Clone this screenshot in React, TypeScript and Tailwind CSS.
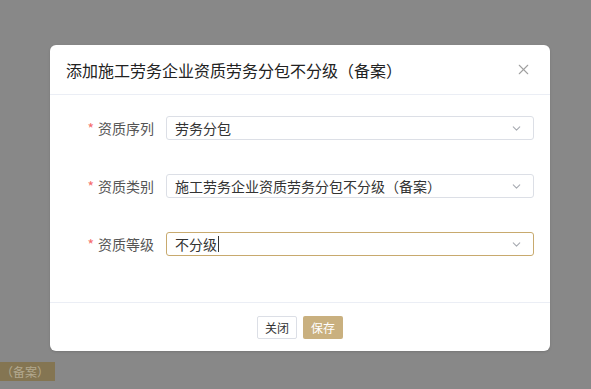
import { ChevronDown, X } from "lucide-react";

interface FieldProps {
  label: string;
  value: string;
  focused?: boolean;
}

function Field({ label, value, focused }: FieldProps) {
  return (
    <div className="flex items-center">
      <div className="w-[116px] pr-[12px] text-right text-[14px] text-[#555]">
        <span className="mr-[4px] text-[#f56c6c]">*</span>
        {label}
      </div>
      <div
        className={`flex h-[24px] w-[368px] items-center justify-between rounded-[3px] border bg-white pl-[8px] pr-[10px] ${
          focused ? "border-[#c8aa6e]" : "border-[#dcdfe6]"
        }`}
      >
        <span className="flex items-center text-[14px] leading-none text-[#333]">
          {value}
          {focused && <span className="ml-[1px] inline-block h-[16px] w-px bg-[#333]" />}
        </span>
        <ChevronDown size={13} strokeWidth={2} className="text-[#a8abb2]" />
      </div>
    </div>
  );
}

export default function App() {
  return (
    <div
      className="relative h-[389px] w-[591px] overflow-hidden bg-[#888888]"
      style={{ fontFamily: '"Microsoft YaHei", "Noto Sans CJK SC", sans-serif' }}
    >
      {/* page content behind the mask */}
      <div className="absolute left-0 top-[362px] flex h-[19px] w-[55px] items-center bg-[#847552] pl-[1px] text-[12px] text-[#b3a98f]">
        （备案）
      </div>

      <div className="relative flex pl-[50px] pt-[45px]">
        <div className="w-[500px] rounded-[6px] bg-white shadow-sm">
          <div className="flex h-[50px] items-center justify-between border-b border-[#ebeef5] pl-[16px] pr-[18px]">
            <span className="text-[16px] text-[#222]">添加施工劳务企业资质劳务分包不分级（备案）</span>
            <X size={17} strokeWidth={1.5} className="text-[#a0a0a0]" />
          </div>

          <div className="flex flex-col gap-[34px] pb-[46px] pt-[21px]">
            <Field label="资质序列" value="劳务分包" />
            <Field label="资质类别" value="施工劳务企业资质劳务分包不分级（备案）" />
            <Field label="资质等级" value="不分级" focused />
          </div>

          <div className="flex justify-center gap-[6px] border-t border-[#ebeef5] pb-[12px] pt-[13px]">
            <button className="flex h-[23px] w-[40px] items-center justify-center rounded-[2px] border border-[#dcdfe6] bg-white text-[12px] text-[#333]">
              关闭
            </button>
            <button className="flex h-[23px] w-[40px] items-center justify-center rounded-[2px] bg-[#c9b07f] text-[12px] text-white">
              保存
            </button>
          </div>
        </div>
      </div>
    </div>
  );
}
